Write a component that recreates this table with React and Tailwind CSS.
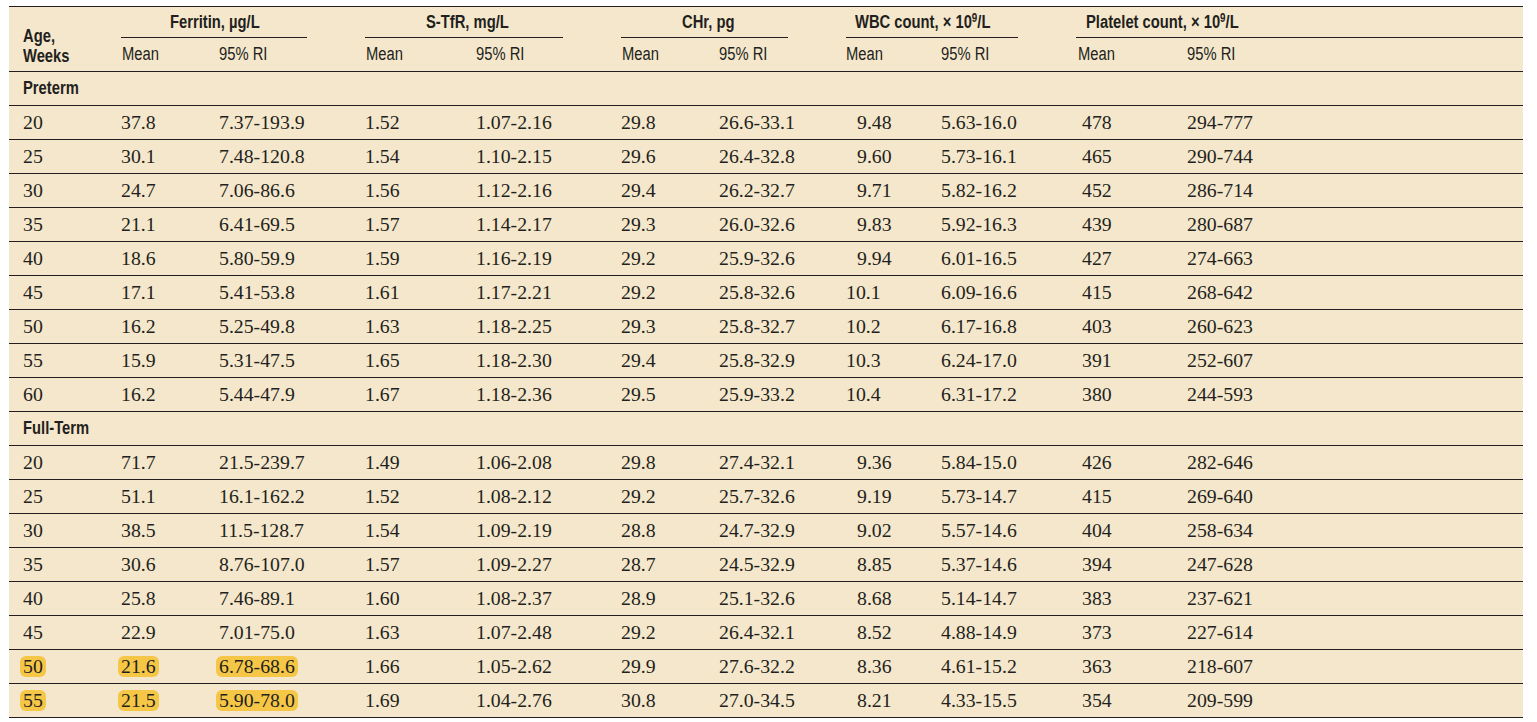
import React from "react";

const preterm = [
  ["20", "37.8", "7.37-193.9", "1.52", "1.07-2.16", "29.8", "26.6-33.1", "9.48", "5.63-16.0", "478", "294-777"],
  ["25", "30.1", "7.48-120.8", "1.54", "1.10-2.15", "29.6", "26.4-32.8", "9.60", "5.73-16.1", "465", "290-744"],
  ["30", "24.7", "7.06-86.6", "1.56", "1.12-2.16", "29.4", "26.2-32.7", "9.71", "5.82-16.2", "452", "286-714"],
  ["35", "21.1", "6.41-69.5", "1.57", "1.14-2.17", "29.3", "26.0-32.6", "9.83", "5.92-16.3", "439", "280-687"],
  ["40", "18.6", "5.80-59.9", "1.59", "1.16-2.19", "29.2", "25.9-32.6", "9.94", "6.01-16.5", "427", "274-663"],
  ["45", "17.1", "5.41-53.8", "1.61", "1.17-2.21", "29.2", "25.8-32.6", "10.1", "6.09-16.6", "415", "268-642"],
  ["50", "16.2", "5.25-49.8", "1.63", "1.18-2.25", "29.3", "25.8-32.7", "10.2", "6.17-16.8", "403", "260-623"],
  ["55", "15.9", "5.31-47.5", "1.65", "1.18-2.30", "29.4", "25.8-32.9", "10.3", "6.24-17.0", "391", "252-607"],
  ["60", "16.2", "5.44-47.9", "1.67", "1.18-2.36", "29.5", "25.9-33.2", "10.4", "6.31-17.2", "380", "244-593"],
];

const fullTerm = [
  ["20", "71.7", "21.5-239.7", "1.49", "1.06-2.08", "29.8", "27.4-32.1", "9.36", "5.84-15.0", "426", "282-646"],
  ["25", "51.1", "16.1-162.2", "1.52", "1.08-2.12", "29.2", "25.7-32.6", "9.19", "5.73-14.7", "415", "269-640"],
  ["30", "38.5", "11.5-128.7", "1.54", "1.09-2.19", "28.8", "24.7-32.9", "9.02", "5.57-14.6", "404", "258-634"],
  ["35", "30.6", "8.76-107.0", "1.57", "1.09-2.27", "28.7", "24.5-32.9", "8.85", "5.37-14.6", "394", "247-628"],
  ["40", "25.8", "7.46-89.1", "1.60", "1.08-2.37", "28.9", "25.1-32.6", "8.68", "5.14-14.7", "383", "237-621"],
  ["45", "22.9", "7.01-75.0", "1.63", "1.07-2.48", "29.2", "26.4-32.1", "8.52", "4.88-14.9", "373", "227-614"],
  ["50", "21.6", "6.78-68.6", "1.66", "1.05-2.62", "29.9", "27.6-32.2", "8.36", "4.61-15.2", "363", "218-607", true],
  ["55", "21.5", "5.90-78.0", "1.69", "1.04-2.76", "30.8", "27.0-34.5", "8.21", "4.33-15.5", "354", "209-599", true],
];

const grid =
  "grid grid-cols-[112px_98px_146px_111px_145px_98px_127px_95px_135px_111px_1fr]";
const sans = "font-['Liberation_Sans','Arial',sans-serif]";
const serif = "font-['Liberation_Serif','Times_New_Roman',serif]";

function N({ children }) {
  return <span className="inline-block origin-left scale-x-[0.82] whitespace-nowrap">{children}</span>;
}

function Cell({ children, i, hl }) {
  let pad = "";
  if (i === 0) pad = "pl-[14px]";
  if (i === 7 && children.length === 4 && !children.startsWith("1")) pad = "pl-[11px]";
  if (i === 9) pad = "pl-[6px]";
  return (
    <div className={`flex items-center ${pad}`}>
      {hl && i <= 2 ? (
        <span className="-ml-[3px] px-[3px] rounded-[6px] bg-[#f6c746] leading-[21px]">{children}</span>
      ) : (
        <span>{children}</span>
      )}
    </div>
  );
}

function Row({ r }) {
  const hl = r[11] === true;
  return (
    <div className={`${grid} h-[34px] border-b border-[#231f20] ${serif} text-[19.8px] text-[#231f20]`}>
      {r.slice(0, 11).map((v, i) => (
        <Cell key={i} i={i} hl={hl}>
          {v}
        </Cell>
      ))}
    </div>
  );
}

function Section({ label }) {
  return (
    <div className={`h-[34px] border-b border-[#231f20] flex items-center pl-[14px] ${sans} font-bold text-[18px] text-[#231f20]`}>
      <N>{label}</N>
    </div>
  );
}

function Group({ children, pl, mr, col }) {
  return (
    <div className={`${col} row-start-1 flex flex-col ${mr}`}>
      <div className={`h-[31px] flex items-center border-b border-[#231f20] ${pl} font-bold whitespace-nowrap`}>
        <N>{children}</N>
      </div>
    </div>
  );
}

function Sup() {
  return <sup className="text-[12px] leading-none align-top relative -top-[1px]">9</sup>;
}

const colStart = [
  "",
  "col-start-1",
  "col-start-2",
  "col-start-3",
  "col-start-4",
  "col-start-5",
  "col-start-6",
  "col-start-7",
  "col-start-8",
  "col-start-9",
  "col-start-10",
  "col-start-11",
];

export default function App() {
  return (
    <div className="min-h-screen bg-white pt-[6px] pl-[9px]">
      <div className="w-[1514px] bg-[#f5e7cb] border-t border-[#231f20]">
        <div
          className={`${grid} grid-rows-[32px_32px] border-b border-[#231f20] ${sans} text-[18px] text-[#231f20] leading-none`}
        >
          <div className="col-start-1 row-start-1 row-span-2 flex flex-col justify-end pl-[14px] pb-[5px] font-bold leading-[20px]">
            <div>
              <N>Age,</N>
            </div>
            <div>
              <N>Weeks</N>
            </div>
          </div>
          <Group col="col-start-2 col-span-2" pl="pl-[49px]" mr="mr-[58px]">
            Ferritin, µg/L
          </Group>
          <Group col="col-start-4 col-span-2" pl="pl-[61px]" mr="mr-[58px]">
            S-TfR, mg/L
          </Group>
          <Group col="col-start-6 col-span-2" pl="pl-[61px]" mr="mr-[58px]">
            CHr, pg
          </Group>
          <Group col="col-start-8 col-span-2" pl="pl-[9px]" mr="mr-[58px]">
            WBC count, × 10
            <Sup />
            /L
          </Group>
          <Group col="col-start-10 col-span-2" pl="pl-[10px]" mr="">
            Platelet count, × 10
            <Sup />
            /L
          </Group>
          {[2, 3, 4, 5, 6, 7, 8, 9, 10, 11].map((c) => (
            <div
              key={c}
              className={`row-start-2 flex items-center pb-[2px] ${colStart[c]} ${
                c === 2 || c === 4 || c === 6 ? "pl-[1px]" : ""
              } ${c === 10 ? "pl-[2px]" : ""}`}
            >
              <N>{c % 2 === 0 ? "Mean" : "95% RI"}</N>
            </div>
          ))}
        </div>
        <Section label="Preterm" />
        {preterm.map((r, i) => (
          <Row key={"p" + i} r={r} />
        ))}
        <Section label="Full-Term" />
        {fullTerm.map((r, i) => (
          <Row key={"f" + i} r={r} />
        ))}
      </div>
    </div>
  );
}
